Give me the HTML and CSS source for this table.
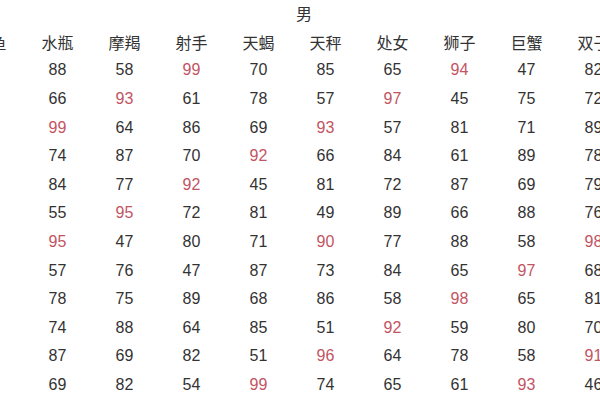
FILE: index.html
```html
<!DOCTYPE html>
<html lang="zh">
<head>
<meta charset="utf-8">
<link rel="stylesheet" href="styles.css">
</head>
<body>
<div class="sheet">
  <div class="title">男</div>
  <div class="grid">
    <div class="h">双鱼</div><div class="h">水瓶</div><div class="h">摩羯</div><div class="h">射手</div><div class="h">天蝎</div><div class="h">天秤</div><div class="h">处女</div><div class="h">狮子</div><div class="h">巨蟹</div><div class="h">双子</div>

    <div class="n">72</div><div class="n">88</div><div class="n">58</div><div class="n r">99</div><div class="n">70</div><div class="n">85</div><div class="n">65</div><div class="n r">94</div><div class="n">47</div><div class="n">82</div>
    <div class="n">81</div><div class="n">66</div><div class="n r">93</div><div class="n">61</div><div class="n">78</div><div class="n">57</div><div class="n r">97</div><div class="n">45</div><div class="n">75</div><div class="n">72</div>
    <div class="n">64</div><div class="n r">99</div><div class="n">64</div><div class="n">86</div><div class="n">69</div><div class="n r">93</div><div class="n">57</div><div class="n">81</div><div class="n">71</div><div class="n">89</div>
    <div class="n">77</div><div class="n">74</div><div class="n">87</div><div class="n">70</div><div class="n r">92</div><div class="n">66</div><div class="n">84</div><div class="n">61</div><div class="n">89</div><div class="n">78</div>
    <div class="n">68</div><div class="n">84</div><div class="n">77</div><div class="n r">92</div><div class="n">45</div><div class="n">81</div><div class="n">72</div><div class="n">87</div><div class="n">69</div><div class="n">79</div>
    <div class="n">83</div><div class="n">55</div><div class="n r">95</div><div class="n">72</div><div class="n">81</div><div class="n">49</div><div class="n">89</div><div class="n">66</div><div class="n">88</div><div class="n">76</div>
    <div class="n">59</div><div class="n r">95</div><div class="n">47</div><div class="n">80</div><div class="n">71</div><div class="n r">90</div><div class="n">77</div><div class="n">88</div><div class="n">58</div><div class="n r">98</div>
    <div class="n">76</div><div class="n">57</div><div class="n">76</div><div class="n">47</div><div class="n">87</div><div class="n">73</div><div class="n">84</div><div class="n">65</div><div class="n r">97</div><div class="n">68</div>
    <div class="n">85</div><div class="n">78</div><div class="n">75</div><div class="n">89</div><div class="n">68</div><div class="n">86</div><div class="n">58</div><div class="n r">98</div><div class="n">65</div><div class="n">81</div>
    <div class="n">73</div><div class="n">74</div><div class="n">88</div><div class="n">64</div><div class="n">85</div><div class="n">51</div><div class="n r">92</div><div class="n">59</div><div class="n">80</div><div class="n">70</div>
    <div class="n">62</div><div class="n">87</div><div class="n">69</div><div class="n">82</div><div class="n">51</div><div class="n r">96</div><div class="n">64</div><div class="n">78</div><div class="n">58</div><div class="n r">91</div>
    <div class="n">80</div><div class="n">69</div><div class="n">82</div><div class="n">54</div><div class="n r">99</div><div class="n">74</div><div class="n">65</div><div class="n">61</div><div class="n r">93</div><div class="n">46</div>
  </div>
</div>
</body>
</html>
```

FILE: styles.css
```css
html, body {
  margin: 0;
  padding: 0;
  background: #ffffff;
  overflow: hidden;
}
body {
  width: 600px;
  height: 400px;
}
.sheet {
  margin-top: -1px;
  margin-left: -43px;
  width: 670px;
  color: #333333;
}
.title {
  height: 28.6px;
  line-height: 28.6px;
  padding-left: 24px;
  text-align: center;
  font-family: "Noto Sans CJK SC", sans-serif;
  font-size: 16px;
}
.grid {
  display: grid;
  grid-template-columns: repeat(10, 67px);
  grid-auto-rows: 28.6px;
  align-items: center;
  justify-items: center;
}
.h {
  font-family: "Noto Sans CJK SC", sans-serif;
  font-size: 16px;
  line-height: 1;
}
.n {
  font-family: "Liberation Sans", sans-serif;
  font-size: 16px;
  line-height: 1;
}
.r {
  color: #c25563;
}
```
